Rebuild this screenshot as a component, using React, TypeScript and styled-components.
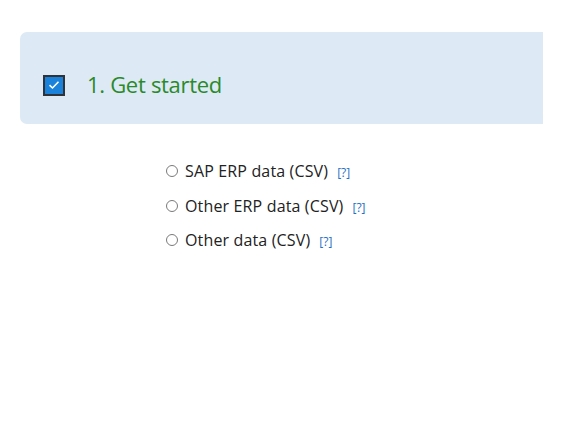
import React from "react";
import styled, { createGlobalStyle } from "styled-components";

const GlobalStyle = createGlobalStyle`
  html, body { margin: 0; padding: 0; background: #ffffff; }
  body { font-family: "Open Sans", "Noto Sans", sans-serif; color: #222; }
`;

const Page = styled.div`
  padding: 32px 25px 0 20px;
  display: flex;
  flex-direction: column;
`;

const StepHeader = styled.div`
  height: 92px;
  background: #dde9f5;
  border-radius: 7px 0 0 7px;
  display: flex;
  align-items: center;
  padding: 12px 0 0 23px;
  gap: 22px;
  box-sizing: border-box;
`;

const CheckBox = styled.span`
  width: 22px;
  height: 21px;
  box-sizing: border-box;
  background: #1b82dc;
  border: 2px solid #2f3338;
  display: flex;
  align-items: center;
  justify-content: center;
  margin-top: 2px;
`;

const StepTitle = styled.h2`
  margin: 0;
  font-size: 22px;
  font-weight: 400;
  color: #2a8a2a;
  letter-spacing: -0.3px;
`;

const Options = styled.div`
  display: flex;
  flex-direction: column;
  gap: 12px;
  padding: 36px 0 0 146px;
`;

const OptionRow = styled.label`
  display: flex;
  align-items: center;
  height: 22.5px;
  font-size: 16px;
  letter-spacing: 0.15px;
  color: #222;
  gap: 6px;
`;

const Radio = styled.span`
  width: 12px;
  height: 12px;
  box-sizing: border-box;
  border: 1px solid #7a7a7a;
  border-radius: 50%;
  background: #fff;
  margin-right: 1px;
`;

const Help = styled.a`
  font-size: 12px;
  color: #1f6fc5;
  text-decoration: none;
  letter-spacing: 0;
  margin-left: 3px;
  margin-top: 3px;
`;

const options = ["SAP ERP data (CSV)", "Other ERP data (CSV)", "Other data (CSV)"];

export default function App() {
  return (
    <>
      <GlobalStyle />
      <Page>
        <StepHeader>
          <CheckBox>
            <svg width="12" height="10" viewBox="0 0 12 10">
              <path d="M1.5 5.2 L4.5 8 L10.5 1.8" fill="none" stroke="#fff" strokeWidth="1.6" />
            </svg>
          </CheckBox>
          <StepTitle>1. Get started</StepTitle>
        </StepHeader>
        <Options>
          {options.map((o) => (
            <OptionRow key={o}>
              <Radio />
              <span>{o}</span>
              <Help href="#">[?]</Help>
            </OptionRow>
          ))}
        </Options>
      </Page>
    </>
  );
}
